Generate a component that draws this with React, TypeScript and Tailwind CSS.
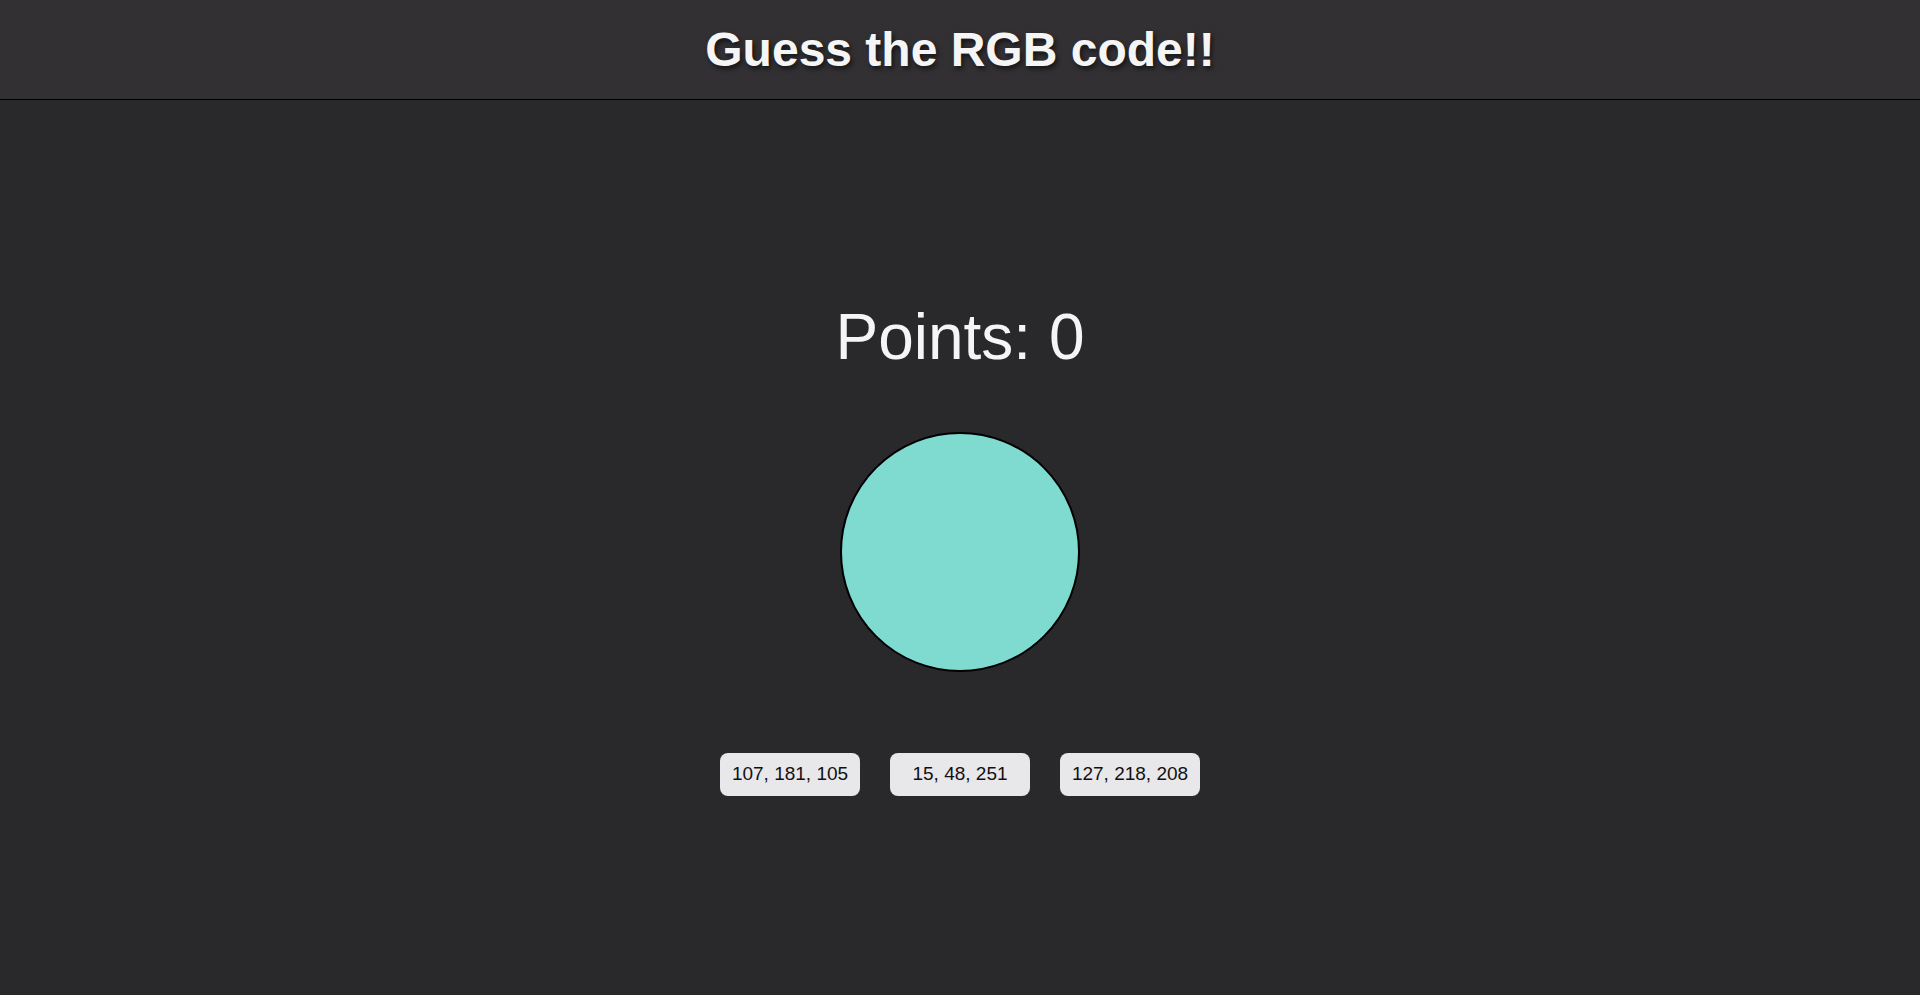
const options = ["107, 181, 105", "15, 48, 251", "127, 218, 208"]

export default function App() {
  return (
    <div className="min-h-screen bg-[#29282b] font-['Liberation_Sans',Arial,sans-serif]">
      <header className="flex h-[100px] items-center justify-center border-b border-black bg-[#323033]">
        <h1 className="text-[48px] font-bold leading-none text-[#f5f5f5] [text-shadow:2px_3px_5px_rgba(0,0,0,0.6)]">
          Guess the RGB code!!
        </h1>
      </header>
      <main className="flex flex-col items-center">
        <p className="mt-[205px] text-[64px] leading-none text-[#f5f5f5]">Points: 0</p>
        <div className="mt-[63px] h-[240px] w-[240px] rounded-full border-2 border-black bg-[rgb(127,218,208)]" />
        <div className="mt-[81px] flex gap-[30px]">
          {options.map((o) => (
            <button
              key={o}
              type="button"
              className="h-[43px] w-[140px] rounded-lg bg-[#e8e7ea] text-[19px] text-[#111]"
            >
              {o}
            </button>
          ))}
        </div>
      </main>
    </div>
  )
}
